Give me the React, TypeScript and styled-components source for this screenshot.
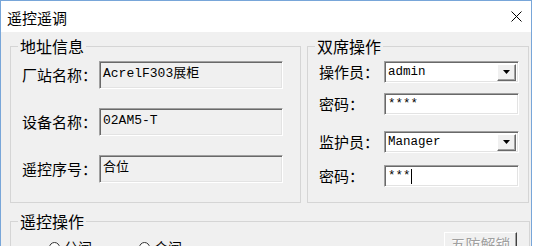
import React from "react";
import styled, { createGlobalStyle } from "styled-components";

const GlobalStyle = createGlobalStyle`
  html, body {
    margin: 0;
    padding: 0;
    background: #ffffff;
    overflow: hidden;
    font-family: "Noto Sans CJK SC", "Noto Sans", sans-serif;
  }
`;

const Window = styled.div`
  width: 532px;
  height: 246px;
  box-sizing: border-box;
  border: 1px solid #78a6d9;
  border-bottom: none;
  background: #f0f0f0;
  display: flex;
  flex-direction: column;
  overflow: hidden;
`;

const TitleBar = styled.div`
  height: 31px;
  flex: none;
  background: #ffffff;
  display: flex;
  align-items: center;
  justify-content: space-between;
  padding: 0 9px 0 6px;
  font-size: 15px;
  color: #000;
`;

const Title = styled.span`
  line-height: 20px;
  margin-top: 2px;
`;

const Body = styled.div`
  padding: 4px 0 0 9px;
  display: flex;
  flex-direction: column;
  gap: 8px;
`;

const TopRow = styled.div`
  display: flex;
  gap: 6px;
`;

const Group = styled.fieldset<{ $w: number; $h?: number }>`
  margin: 0;
  padding: 0 0 0 7px;
  box-sizing: border-box;
  width: ${(p) => p.$w}px;
  ${(p) => (p.$h ? `height: ${p.$h}px;` : "")}
  border: 1px solid #d5d5d5;
  border-radius: 0;
  min-inline-size: 0;
`;

const Legend = styled.legend`
  padding: 0 2px;
  font-size: 16px;
  line-height: 20px;
  color: #000;
`;

const AddressContent = styled.div`
  padding: 5px 16px 0 4px;
  display: flex;
  flex-direction: column;
  gap: 19px;
`;

const DualContent = styled.div`
  padding: 0 8px 0 4px;
  display: flex;
  flex-direction: column;
`;

const OpContent = styled.div`
  padding: 0 12px 0 31px;
  display: flex;
  align-items: flex-start;
  height: 40px;
`;

const Row = styled.div<{ $mt?: number }>`
  display: flex;
  align-items: center;
  margin-top: ${(p) => p.$mt ?? 0}px;
`;

const Label = styled.span<{ $w: number }>`
  width: ${(p) => p.$w}px;
  flex: none;
  font-size: 15px;
  line-height: 20px;
  color: #000;
  white-space: nowrap;
`;

const sunken = `
  box-sizing: border-box;
  border: 1px solid;
  border-color: #a0a0a0 #ffffff #ffffff #a0a0a0;
  box-shadow: inset 1px 1px 0 #696969, inset -1px -1px 0 #e3e3e3;
`;

const ReadBox = styled.div`
  ${sunken}
  width: 184px;
  height: 28px;
  background: #f0f0f0;
  padding: 3px 0 0 3px;
  font-family: "Liberation Mono", "Noto Sans CJK SC", monospace;
  font-size: 13px;
  line-height: 18px;
  color: #000;
  white-space: nowrap;
`;

const Combo = styled.div`
  ${sunken}
  width: 135px;
  height: 22px;
  background: #fff;
  display: flex;
  align-items: center;
  padding: 0 2px 0 3px;
`;

const ComboText = styled.span`
  flex: 1;
  font-family: "Liberation Mono", monospace;
  font-size: 12.5px;
  line-height: 16px;
  color: #000;
`;

const DropButton = styled.div`
  width: 19px;
  height: 17px;
  box-sizing: border-box;
  background: #f0f0f0;
  border: 1px solid;
  border-color: #ffffff #696969 #696969 #ffffff;
  box-shadow: inset -1px -1px 0 #a0a0a0;
  display: flex;
  align-items: center;
  justify-content: center;
`;

const PassBox = styled.div`
  ${sunken}
  width: 135px;
  height: 22px;
  background: #fff;
  display: flex;
  align-items: center;
  padding: 0 3px;
  font-family: "Liberation Mono", monospace;
  font-size: 12.5px;
  color: #000;
`;

const Caret = styled.span`
  display: inline-block;
  width: 1px;
  height: 15px;
  background: #000;
`;

const Radio = styled.label`
  display: flex;
  align-items: center;
  gap: 4px;
  margin-top: 7px;
  margin-right: 47px;
  font-size: 14px;
  line-height: 18px;
  color: #000;
`;

const RadioDot = styled.span`
  width: 11px;
  height: 11px;
  box-sizing: border-box;
  border-radius: 50%;
  border: 1px solid #333;
  background: #fff;
`;

const Spacer = styled.div`
  flex: 1;
`;

const Button = styled.div`
  box-sizing: border-box;
  width: 73px;
  height: 26px;
  margin-top: 1px;
  background: #f0f0f0;
  border: 1px solid;
  border-color: #ffffff #404040 #404040 #ffffff;
  box-shadow: inset -1px -1px 0 #a0a0a0;
  display: flex;
  justify-content: center;
  padding-top: 1px;
  font-size: 15px;
  line-height: 20px;
  color: #a0a0a0;
  text-shadow: 1px 1px 0 #ffffff;
`;

const CloseIcon = () => (
  <svg width="11" height="11" viewBox="0 0 11 11">
    <path d="M0.5 0.5 L10.5 10.5 M10.5 0.5 L0.5 10.5" stroke="#000" strokeWidth="1" fill="none" />
  </svg>
);

const Triangle = () => (
  <svg width="7" height="4" viewBox="0 0 7 4">
    <path d="M0 0 H7 L3.5 4 Z" fill="#000" />
  </svg>
);

export default function App() {
  return (
    <>
      <GlobalStyle />
      <Window>
        <TitleBar>
          <Title>遥控遥调</Title>
          <CloseIcon />
        </TitleBar>
        <Body>
          <TopRow>
            <Group $w={291} $h={167}>
              <Legend>地址信息</Legend>
              <AddressContent>
                <Row>
                  <Label $w={77}>厂站名称：</Label>
                  <ReadBox>AcrelF303展柜</ReadBox>
                </Row>
                <Row>
                  <Label $w={77}>设备名称：</Label>
                  <ReadBox>02AM5-T</ReadBox>
                </Row>
                <Row>
                  <Label $w={77}>遥控序号：</Label>
                  <ReadBox>合位</ReadBox>
                </Row>
              </AddressContent>
            </Group>
            <Group $w={222} $h={167}>
              <Legend>双席操作</Legend>
              <DualContent>
                <Row $mt={5}>
                  <Label $w={65}>操作员：</Label>
                  <Combo>
                    <ComboText>admin</ComboText>
                    <DropButton>
                      <Triangle />
                    </DropButton>
                  </Combo>
                </Row>
                <Row $mt={10}>
                  <Label $w={65}>密码：</Label>
                  <PassBox>****</PassBox>
                </Row>
                <Row $mt={16}>
                  <Label $w={65}>监护员：</Label>
                  <Combo>
                    <ComboText>Manager</ComboText>
                    <DropButton>
                      <Triangle />
                    </DropButton>
                  </Combo>
                </Row>
                <Row $mt={12}>
                  <Label $w={65}>密码：</Label>
                  <PassBox>
                    ***
                    <Caret />
                  </PassBox>
                </Row>
              </DualContent>
            </Group>
          </TopRow>
          <Group $w={520}>
            <Legend>遥控操作</Legend>
            <OpContent>
              <Radio>
                <RadioDot />
                分闸
              </Radio>
              <Radio>
                <RadioDot />
                合闸
              </Radio>
              <Spacer />
              <Button>五防解锁</Button>
            </OpContent>
          </Group>
        </Body>
      </Window>
    </>
  );
}
